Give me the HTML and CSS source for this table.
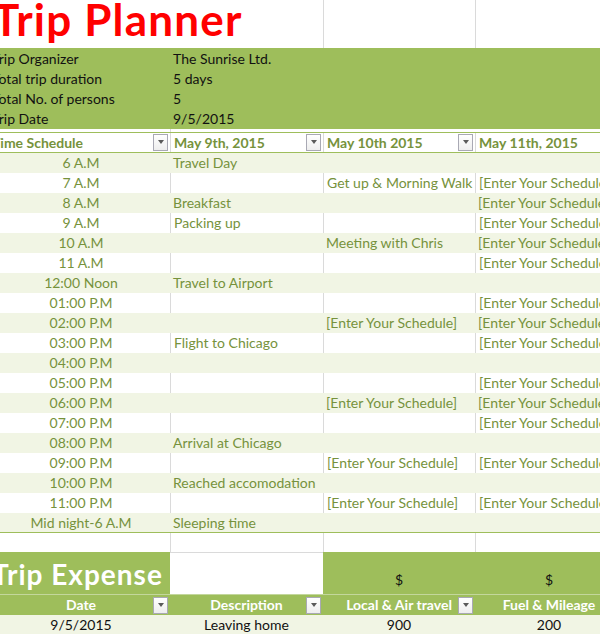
FILE: index.html
```html
<!DOCTYPE html>
<html>
<head>
<meta charset="utf-8">
<link rel="stylesheet" href="styles.css">
</head>
<body>
<div class="sheet">
  <div class="row title-row">
    <div class="cell title-cell"><span class="title">Trip Planner</span></div>
    <div class="cell grid-l"></div>
    <div class="cell grid-l"></div>
  </div>

  <div class="info">
    <div class="row"><div class="cell first">Trip Organizer</div><div class="cell">The Sunrise Ltd.</div></div>
    <div class="row"><div class="cell first">Total trip duration</div><div class="cell">5 days</div></div>
    <div class="row"><div class="cell first">Total No. of persons</div><div class="cell">5</div></div>
    <div class="row"><div class="cell first">Trip Date</div><div class="cell">9/5/2015</div></div>
  </div>

  <div class="row gap-row"><div class="cell"></div><div class="cell grid-l"></div><div class="cell"></div><div class="cell"></div></div>

  <div class="sched">
    <div class="row sched-head">
      <div class="cell hcell first"><span>Time Schedule</span><span class="filter"></span></div>
      <div class="cell hcell grid-l"><span>May 9th, 2015</span><span class="filter"></span></div>
      <div class="cell hcell grid-l"><span>May 10th 2015</span><span class="filter"></span></div>
      <div class="cell hcell grid-l"><span>May 11th, 2015</span></div>
    </div>
    <div class="row band"><div class="cell time">6 A.M</div><div class="cell">Travel Day</div><div class="cell"></div><div class="cell"></div></div>
    <div class="row plain"><div class="cell time">7 A.M</div><div class="cell"></div><div class="cell">Get up &amp; Morning Walk</div><div class="cell">[Enter Your Schedule]</div></div>
    <div class="row band"><div class="cell time">8 A.M</div><div class="cell">Breakfast</div><div class="cell"></div><div class="cell">[Enter Your Schedule]</div></div>
    <div class="row plain"><div class="cell time">9 A.M</div><div class="cell">Packing up</div><div class="cell"></div><div class="cell">[Enter Your Schedule]</div></div>
    <div class="row band"><div class="cell time">10 A.M</div><div class="cell"></div><div class="cell">Meeting with Chris</div><div class="cell">[Enter Your Schedule]</div></div>
    <div class="row plain"><div class="cell time">11 A.M</div><div class="cell"></div><div class="cell"></div><div class="cell">[Enter Your Schedule]</div></div>
    <div class="row band"><div class="cell time">12:00 Noon</div><div class="cell">Travel to Airport</div><div class="cell"></div><div class="cell"></div></div>
    <div class="row plain"><div class="cell time">01:00 P.M</div><div class="cell"></div><div class="cell"></div><div class="cell">[Enter Your Schedule]</div></div>
    <div class="row band"><div class="cell time">02:00 P.M</div><div class="cell"></div><div class="cell">[Enter Your Schedule]</div><div class="cell">[Enter Your Schedule]</div></div>
    <div class="row plain"><div class="cell time">03:00 P.M</div><div class="cell">Flight to Chicago</div><div class="cell"></div><div class="cell">[Enter Your Schedule]</div></div>
    <div class="row band"><div class="cell time">04:00 P.M</div><div class="cell"></div><div class="cell"></div><div class="cell"></div></div>
    <div class="row plain"><div class="cell time">05:00 P.M</div><div class="cell"></div><div class="cell"></div><div class="cell">[Enter Your Schedule]</div></div>
    <div class="row band"><div class="cell time">06:00 P.M</div><div class="cell"></div><div class="cell">[Enter Your Schedule]</div><div class="cell">[Enter Your Schedule]</div></div>
    <div class="row plain"><div class="cell time">07:00 P.M</div><div class="cell"></div><div class="cell"></div><div class="cell">[Enter Your Schedule]</div></div>
    <div class="row band"><div class="cell time">08:00 P.M</div><div class="cell">Arrival at Chicago</div><div class="cell"></div><div class="cell"></div></div>
    <div class="row plain"><div class="cell time">09:00 P.M</div><div class="cell"></div><div class="cell">[Enter Your Schedule]</div><div class="cell">[Enter Your Schedule]</div></div>
    <div class="row band"><div class="cell time">10:00 P.M</div><div class="cell">Reached accomodation</div><div class="cell"></div><div class="cell"></div></div>
    <div class="row plain"><div class="cell time">11:00 P.M</div><div class="cell"></div><div class="cell">[Enter Your Schedule]</div><div class="cell">[Enter Your Schedule]</div></div>
    <div class="row band last"><div class="cell time">Mid night-6 A.M</div><div class="cell">Sleeping time</div><div class="cell"></div><div class="cell"></div></div>
  </div>

  <div class="row blank-row"><div class="cell"></div><div class="cell grid-l"></div><div class="cell grid-l"></div><div class="cell grid-l"></div></div>

  <div class="row exp-title">
    <div class="cell exp-name">Trip Expense</div>
    <div class="cell exp-empty"></div>
    <div class="cell exp-cur">$</div>
    <div class="cell exp-cur">$</div>
  </div>
  <div class="row exp-head">
    <div class="cell ehcell"><span></span><span class="ehtext">Date</span><span class="filter"></span></div>
    <div class="cell ehcell"><span></span><span class="ehtext">Description</span><span class="filter"></span></div>
    <div class="cell ehcell"><span></span><span class="ehtext">Local &amp; Air travel</span><span class="filter"></span></div>
    <div class="cell ehcell"><span></span><span class="ehtext">Fuel &amp; Mileage</span><span></span></div>
  </div>
  <div class="row exp-data">
    <div class="cell">9/5/2015</div>
    <div class="cell">Leaving home</div>
    <div class="cell">900</div>
    <div class="cell">200</div>
  </div>
</div>
</body>
</html>
```

FILE: styles.css
```css
html, body {
  margin: 0;
  padding: 0;
  background: #ffffff;
  overflow: hidden;
}
body {
  font-family: Lato, "Noto Sans", sans-serif;
  font-size: 14px;
  color: #76923c;
}
.sheet {
  margin-left: -8px;
  width: 631px;
}
.row {
  display: grid;
  grid-template-columns: 178px 153px 152px 148px;
}
.cell {
  box-sizing: border-box;
  height: 20px;
  line-height: 20px;
  padding: 0 3px;
  white-space: nowrap;
  overflow: hidden;
}
.cell.first {
  padding-left: 0;
}
.grid-l {
  border-left: 1px solid #dadada;
}

/* title */
.title-row {
  grid-template-columns: 331px 152px 148px;
}
.title-row .cell {
  height: 48px;
}
.title-cell {
  padding-left: 1px;
  overflow: visible;
}
.title {
  font-weight: 700;
  font-size: 44px;
  letter-spacing: 1.2px;
  line-height: 38px;
  color: #ff0000;
  display: block;
}

/* info band */
.info {
  background: #9ebe5b;
  color: #111111;
  padding-top: 1px;
}
.info .row {
  grid-template-columns: 178px 453px;
}
.gap-row .cell {
  height: 3px;
}

/* schedule */
.sched {
  border-bottom: 1px solid #9ebe5b;
}
.sched-head {
  border-top: 1px solid #9ebe5b;
  border-bottom: 1px solid #9ebe5b;
}
.hcell {
  height: 19px;
  line-height: 19px;
  font-weight: 700;
  display: flex;
  align-items: center;
  justify-content: space-between;
  padding-right: 2px;
}
.filter {
  box-sizing: border-box;
  width: 15px;
  height: 17px;
  border: 1px solid #a9a9b4;
  background: linear-gradient(#ffffff, #eeeeee);
  display: flex;
  align-items: center;
  justify-content: center;
  flex: none;
}
.filter::after {
  content: "";
  border-left: 3.5px solid transparent;
  border-right: 3.5px solid transparent;
  border-top: 4px solid #5a5a5a;
  margin-top: -1px;
}
.band {
  background: #f1f5e4;
}
.band.last .cell {
  height: 19px;
  line-height: 19px;
}
.plain .cell + .cell {
  border-left: 1px solid #dadada;
}
.time {
  text-align: center;
}

/* expense */
.blank-row .cell {
  height: 19px;
}
.exp-title .cell {
  height: 42px;
}
.exp-name {
  background: #9ebe5b;
  color: #ffffff;
  font-weight: 700;
  font-size: 28px;
  letter-spacing: 1px;
  line-height: 42px;
  padding-left: 0;
  padding-top: 1px;
}
.exp-empty {
  border-top: 1px solid #dadada;
}
.exp-cur {
  background: #9ebe5b;
  color: #111111;
  text-align: center;
  line-height: 20px;
  padding-top: 18px;
}
.exp-head {
  background: #9ebe5b;
  border-top: 1px solid #c3d79c;
}
.ehcell {
  display: grid;
  grid-template-columns: 15px 1fr 15px;
  align-items: center;
  color: #ffffff;
  font-weight: 700;
  padding: 0 2px;
}
.ehtext {
  text-align: center;
}
.exp-data {
  background: #f1f5e4;
  color: #111111;
}
.exp-data .cell {
  text-align: center;
}
```
